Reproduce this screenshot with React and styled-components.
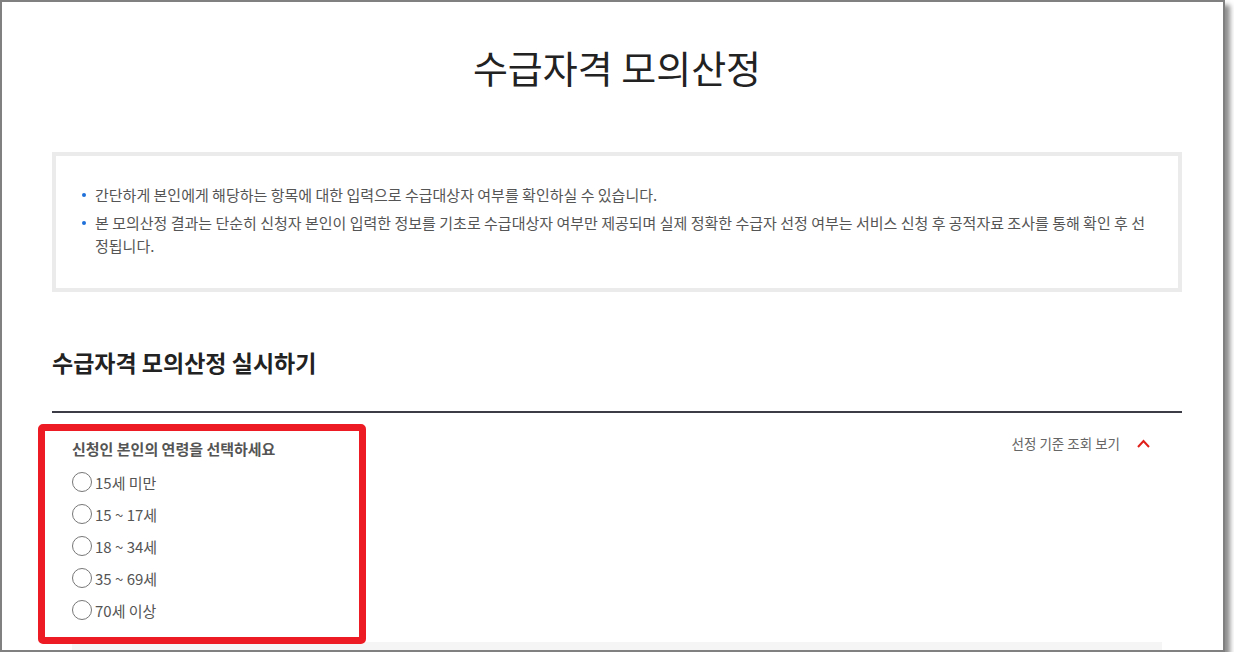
import React, {useState} from 'react';
import styled, {createGlobalStyle} from 'styled-components';

const GlobalStyle = createGlobalStyle`
    body {
        margin: 0;
        background: #ffffff;
        font-family: "Noto Sans CJK KR", "Noto Sans", sans-serif;
    }
    * { box-sizing: border-box; }
`;

const Frame = styled.div`
    position: relative;
    width: 1225px;
    height: 652px;
    border: 2px solid #808080;
    box-shadow: 5px 5px 5px rgba(0, 0, 0, 0.45);
    background: #ffffff;
    overflow: hidden;
`;

const Page = styled.div`
    padding: 0 41px 0 50px;
`;

const Title = styled.h1`
    margin: 0;
    padding-top: 41px;
    text-align: center;
    font-size: 38px;
    line-height: 48px;
    font-weight: 400;
    color: #222222;
`;

const InfoBox = styled.div`
    margin-top: 61px;
    border: 4px solid #ebebeb;
    padding: 27px 30px 31px 24px;
`;

const InfoList = styled.ul`
    margin: 0;
    padding: 0;
    list-style: none;
`;

const InfoItem = styled.li`
    position: relative;
    padding-left: 15px;
    font-size: 15px;
    line-height: 23px;
    color: #555555;
    word-break: break-all;
    & + & { margin-top: 5px; }
    &::before {
        content: '';
        position: absolute;
        left: 2px;
        top: 10px;
        width: 4px;
        height: 4px;
        border-radius: 50%;
        background: #1e6fd9;
    }
`;

const SectionTitle = styled.h2`
    margin: 55px 0 0;
    font-size: 23px;
    line-height: 30px;
    font-weight: 700;
    color: #222222;
`;

const Divider = styled.hr`
    margin: 34px 0 0;
    border: 0;
    border-top: 2px solid #3c3c46;
`;

const QuestionRow = styled.div`
    display: flex;
    justify-content: space-between;
    align-items: flex-start;
    padding: 26px 32px 0 20px;
`;

const QuestionLabel = styled.p`
    margin: 0;
    font-size: 15px;
    line-height: 20px;
    font-weight: 700;
    color: #555555;
`;

const RadioList = styled.div`
    display: flex;
    flex-direction: column;
    gap: 8px;
    margin-top: 11px;
`;

const RadioLabel = styled.label`
    display: flex;
    align-items: center;
    gap: 3px;
    height: 24px;
    font-size: 15px;
    color: #555555;
    cursor: pointer;
`;

const RadioCircle = styled.span`
    width: 20px;
    height: 20px;
    border-radius: 50%;
    border: 1.5px solid ${props => props.checked ? '#1e6fd9' : '#777777'};
    background: ${props => props.checked ? 'radial-gradient(circle, #1e6fd9 4px, #fff 5px)' : '#fff'};
`;

const Toggle = styled.button`
    display: flex;
    align-items: center;
    gap: 17px;
    margin-top: -6px;
    padding: 0;
    border: 0;
    background: none;
    font-family: inherit;
    font-size: 13.5px;
    line-height: 20px;
    color: #666666;
    cursor: pointer;
`;

const CriteriaPanel = styled.div`
    margin: 20px 20px 0;
    height: 60px;
    background: #f5f5f5;
`;

const Annotation = styled.div`
    position: absolute;
    left: 36px;
    top: 422px;
    width: 328px;
    height: 220px;
    border: 7px solid #ed1c24;
    border-radius: 5px;
    pointer-events: none;
`;

const ages = ['15세 미만', '15 ~ 17세', '18 ~ 34세', '35 ~ 69세', '70세 이상'];

const App = () => {
    const [gewaehlt, setGewaehlt] = useState(null);

    return (
        <>
            <GlobalStyle/>
            <Frame>
                <Page>
                    <Title>수급자격 모의산정</Title>
                    <InfoBox>
                        <InfoList>
                            <InfoItem>간단하게 본인에게 해당하는 항목에 대한 입력으로 수급대상자 여부를 확인하실 수 있습니다.</InfoItem>
                            <InfoItem>본 모의산정 결과는 단순히 신청자 본인이 입력한 정보를 기초로 수급대상자 여부만 제공되며 실제 정확한 수급자 선정 여부는 서비스 신청 후 공적자료 조사를 통해 확인 후 선정됩니다.</InfoItem>
                        </InfoList>
                    </InfoBox>
                    <SectionTitle>수급자격 모의산정 실시하기</SectionTitle>
                    <Divider/>
                    <QuestionRow>
                        <div>
                            <QuestionLabel>신청인 본인의 연령을 선택하세요</QuestionLabel>
                            <RadioList>
                                {ages.map((age) => (
                                    <RadioLabel key={age} onClick={() => setGewaehlt(age)}>
                                        <RadioCircle checked={gewaehlt === age}/>
                                        {age}
                                    </RadioLabel>
                                ))}
                            </RadioList>
                        </div>
                        <Toggle>
                            선정 기준 조회 보기
                            <svg width="13" height="9" viewBox="0 0 13 9">
                                <path d="M1 8 L6.5 2 L12 8" fill="none" stroke="#e0201a" strokeWidth="2"/>
                            </svg>
                        </Toggle>
                    </QuestionRow>
                    <CriteriaPanel/>
                </Page>
                <Annotation/>
            </Frame>
        </>
    );
};

export default App;
